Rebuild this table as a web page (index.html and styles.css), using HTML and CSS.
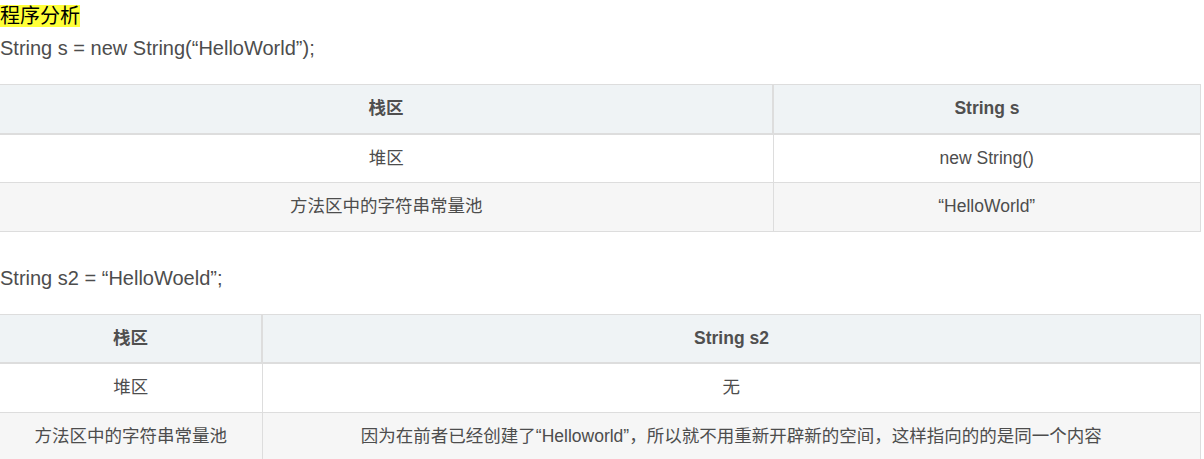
FILE: index.html
```html
<!DOCTYPE html>
<html lang="zh-CN">
<head>
<meta charset="utf-8">
<title>程序分析</title>
<link rel="stylesheet" href="styles.css">
</head>
<body>
<div class="article">
  <p class="para"><mark class="hl">程序分析</mark><br>String s = new String(“HelloWorld”);</p>
  <table class="tbl">
    <colgroup><col class="c1-wide"><col></colgroup>
    <thead>
      <tr><th>栈区</th><th>String s</th></tr>
    </thead>
    <tbody>
      <tr><td>堆区</td><td>new String()</td></tr>
      <tr><td>方法区中的字符串常量池</td><td>“HelloWorld”</td></tr>
    </tbody>
  </table>
  <p class="para">String s2 = “HelloWoeld”;</p>
  <table class="tbl">
    <colgroup><col class="c1-narrow"><col></colgroup>
    <thead>
      <tr><th>栈区</th><th>String s2</th></tr>
    </thead>
    <tbody>
      <tr><td>堆区</td><td>无</td></tr>
      <tr><td>方法区中的字符串常量池</td><td>因为在前者已经创建了“Helloworld”，所以就不用重新开辟新的空间，这样指向的的是同一个内容</td></tr>
    </tbody>
  </table>
</div>
</body>
</html>
```

FILE: styles.css
```css
html, body {
  margin: 0;
  padding: 0;
  background: #ffffff;
}
.article {
  width: 1201px;
  font-family: "Liberation Sans", "Noto Sans CJK SC", sans-serif;
  color: #4d4d4d;
}
.para {
  margin: 0 0 20px 0;
  font-size: 20px;
  line-height: 32px;
}
.hl {
  background: #ffff38;
  color: #000000;
}
.tbl {
  width: 1201px;
  border-collapse: collapse;
  table-layout: fixed;
  margin: 0 0 30px 0;
  font-size: 17.5px;
  line-height: 27.5px;
  border-top: 1px solid #dddddd;
  border-right: 1px solid #dddddd;
}
.c1-wide { width: 773px; }
.c1-narrow { width: 262px; }
.tbl th,
.tbl td {
  padding: 10px 10px;
  text-align: center;
  border-bottom: 1px solid #dddddd;
}
.tbl th + th,
.tbl td + td {
  border-left: 1px solid #dddddd;
}
.tbl thead th {
  background: #eff3f5;
  font-weight: bold;
  color: #4f4f4f;
  border-bottom: 2px solid #dddddd;
}
.tbl thead th + th {
  border-left: 2px solid #dddddd;
}
.tbl tbody tr:nth-child(even) td {
  background: #f6f6f6;
}
.tbl tbody tr:nth-child(odd) td {
  background: #ffffff;
}
```
